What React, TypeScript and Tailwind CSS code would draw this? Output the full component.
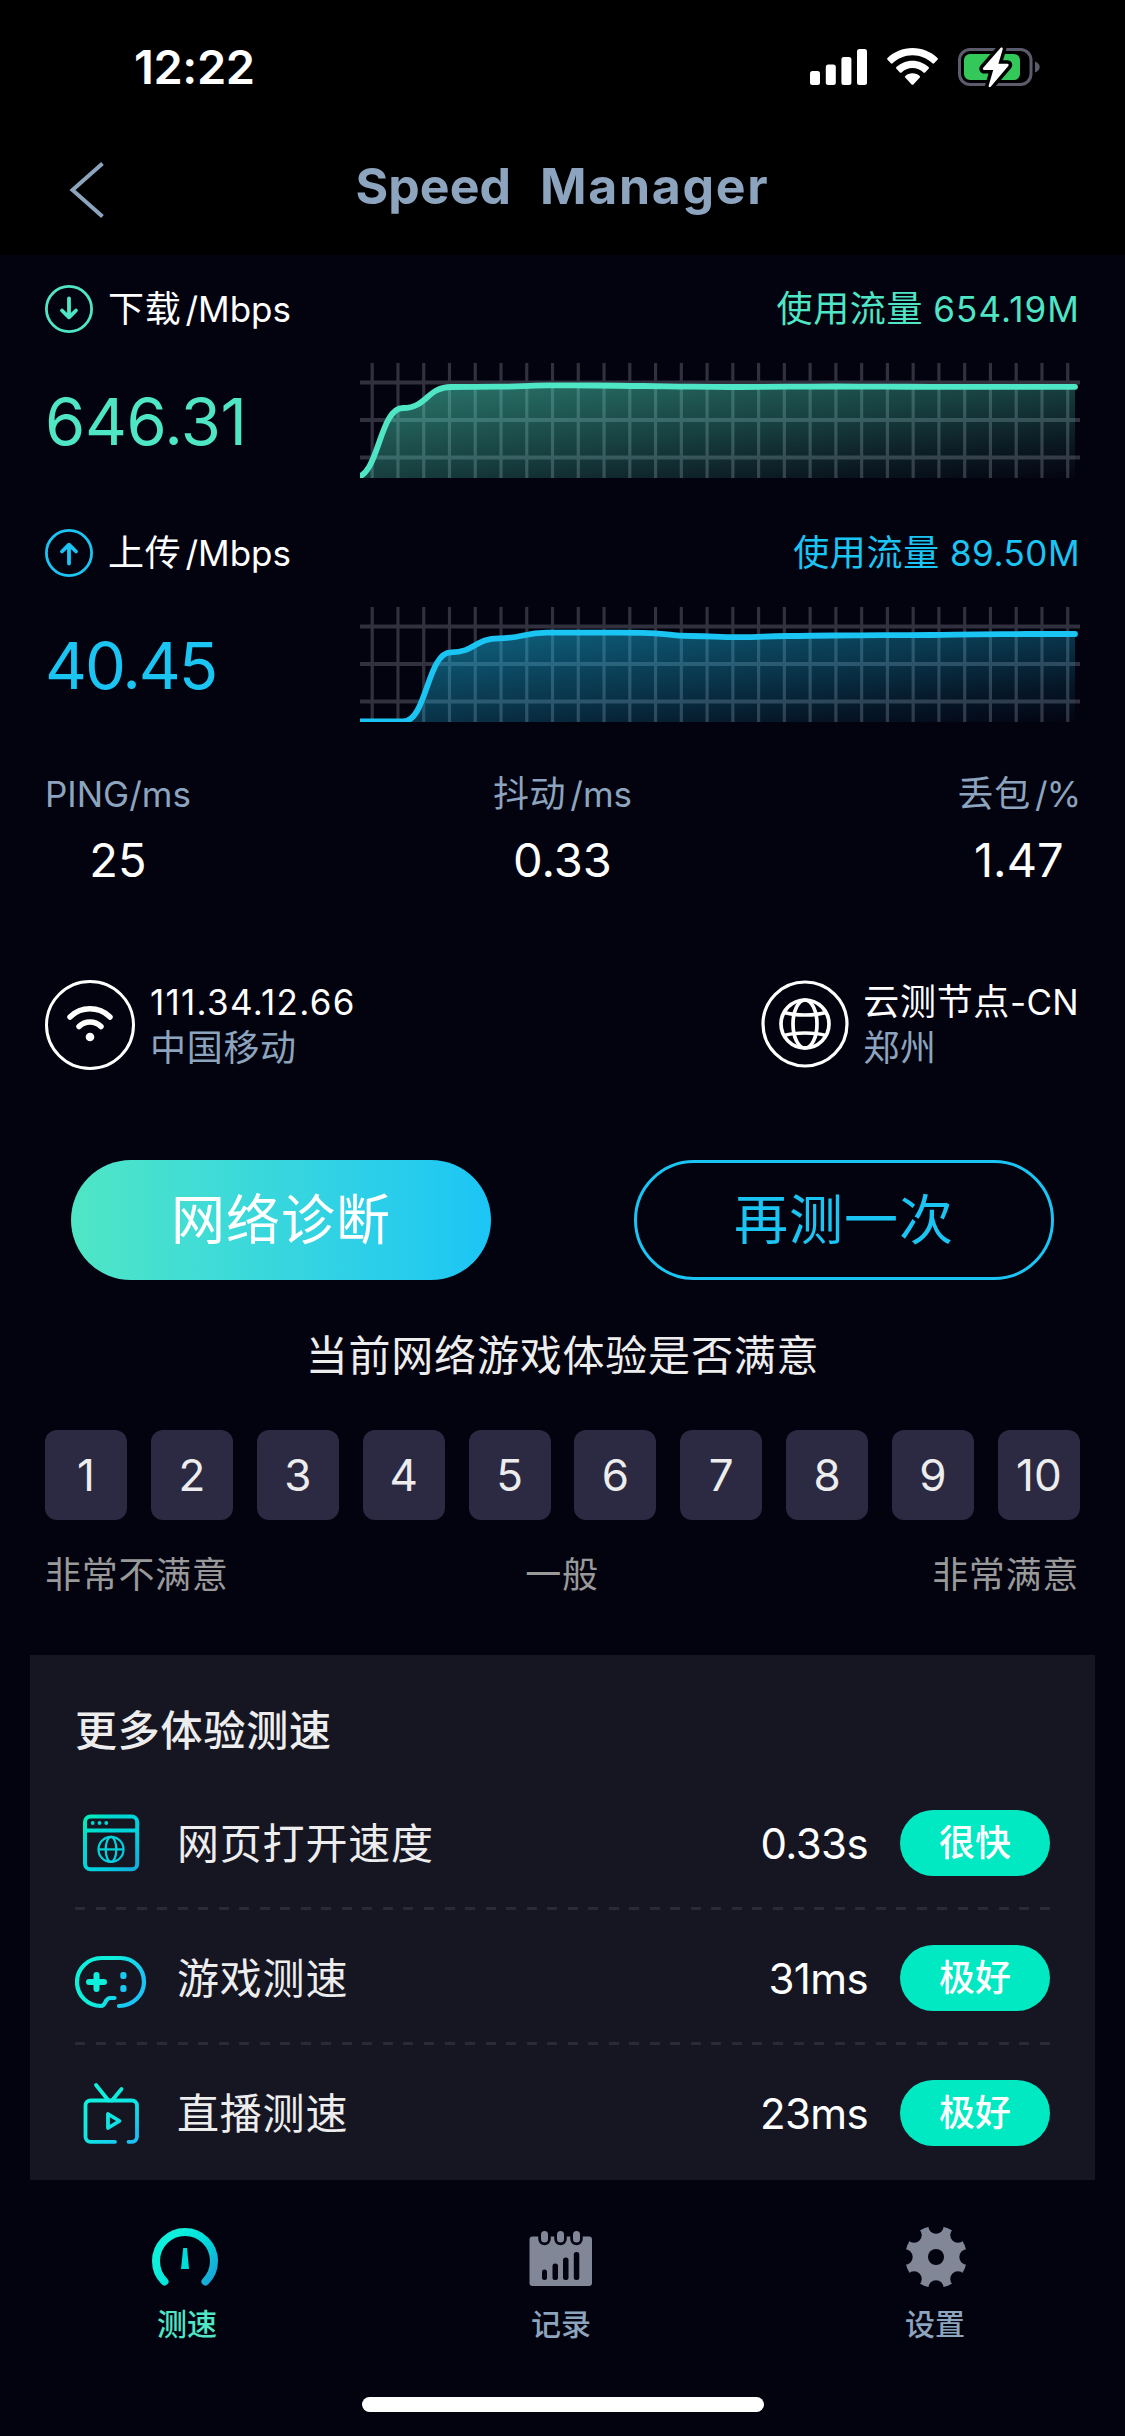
import React from "react";

const GREEN = "#4fe6c5";
const BLUE = "#1bc5f3";

function SignalIcon() {
  return (
    <svg width="57" height="38" viewBox="0 0 57 38" fill="#fff">
      <rect x="0" y="23" width="10" height="14" rx="2.5" />
      <rect x="15.8" y="16.5" width="10" height="20.5" rx="2.5" />
      <rect x="31.4" y="9" width="10" height="28" rx="2.5" />
      <rect x="47" y="1" width="10" height="36" rx="2.5" />
    </svg>
  );
}

function WifiIcon() {
  return (
    <svg width="51" height="38" viewBox="0 0 51 38" fill="#fff">
      <path d="M25.5 0C35.3 0 44.2 3.8 50.5 10.1c.5.5.5 1.2 0 1.7l-3.4 3.5c-.5.5-1.2.5-1.7 0C40.2 10.3 33.2 7.3 25.5 7.3S10.8 10.3 5.6 15.3c-.5.5-1.2.5-1.7 0L.5 11.8c-.5-.5-.5-1.2 0-1.7C6.8 3.8 15.7 0 25.5 0z" />
      <path d="M25.5 12.7c6.2 0 11.9 2.5 16.1 6.4.5.5.5 1.2 0 1.7l-3.5 3.6c-.5.5-1.2.5-1.7 0-2.9-2.7-6.7-4.3-10.9-4.3s-8 1.6-10.9 4.3c-.5.5-1.2.5-1.7 0l-3.5-3.6c-.5-.5-.5-1.2 0-1.7 4.2-3.9 9.9-6.4 16.1-6.4z" />
      <path d="M25.5 25.2c2.8 0 5.3 1 7.2 2.7.5.5.5 1.2.1 1.7l-6.4 6.8c-.5.5-1.3.5-1.8 0l-6.4-6.8c-.5-.5-.4-1.2.1-1.7 1.9-1.7 4.4-2.7 7.2-2.7z" />
    </svg>
  );
}

function BatteryIcon() {
  return (
    <svg width="82" height="42" viewBox="0 0 82 42" fill="none">
      <rect x="1.5" y="3.5" width="71.5" height="35" rx="10.5" stroke="#5b5b6b" strokeWidth="3" />
      <path d="M77 15.5c3 1 4.7 3 4.7 5.5s-1.7 4.5-4.7 5.5z" fill="#5b5b6b" />
      <rect x="6" y="8" width="56" height="26" rx="6" fill="#34c759" />
      <path
        d="M42.5 2 25.2 21.8c-.8 1-.3 2.2 1 2.2h9L30.700 39.500c-.4 1.600 1.200 2.200 2.200 1L50.300 20c.8-1 .3-2.200-1-2.200h-8.900L44.700 3.200C45.100 1.600 43.500 1 42.500 2z"
        fill="#fff"
        stroke="#000"
        strokeWidth="7"
        paintOrder="stroke"
      />
    </svg>
  );
}

function ArrowCircle({ color, up }: { color: string; up?: boolean }) {
  return (
    <svg width="48" height="48" viewBox="0 0 48 48" fill="none" stroke={color}>
      <circle cx="24" cy="24" r="22.6" strokeWidth="2.8" />
      <path
        d={up ? "M24 34.5V16M17 22.5l7-6.8 7 6.8" : "M24 13.5V32M17 25.5l7 6.8 7-6.8"}
        strokeWidth="3.8"
        strokeLinecap="round"
        strokeLinejoin="round"
      />
    </svg>
  );
}

/* Smooth line through evenly spaced samples, flat at every sample. */
function linePath(ys: number[]) {
  const step = 48;
  const x0 = -5;
  let d = `M${x0} ${ys[0]}`;
  for (let i = 1; i < ys.length; i++) {
    const px = x0 + step * (i - 1);
    const x = x0 + step * i;
    const m = (px + x) / 2;
    d += ` C${m} ${ys[i - 1]} ${m} ${ys[i]} ${x} ${ys[i]}`;
  }
  return d;
}

function SpeedChart({ id, color, ys }: { id: string; color: string; ys: number[] }) {
  const d = linePath(ys);
  return (
    <svg width="720" height="115" viewBox="0 0 720 115" fill="none">
      <defs>
        <linearGradient id={id} x1="0" y1="0" x2="1" y2="1">
          <stop offset="0" stopColor={color} stopOpacity="0.52" />
          <stop offset="0.5" stopColor={color} stopOpacity="0.27" />
          <stop offset="0.8" stopColor={color} stopOpacity="0.1" />
          <stop offset="1" stopColor={color} stopOpacity="0.01" />
        </linearGradient>
      </defs>
      {Array.from({ length: 28 }, (_, i) => (
        <line key={i} x1={12.2 + i * 25.76} x2={12.2 + i * 25.76} y1="0" y2="115" stroke="#31303f" strokeWidth="3.2" />
      ))}
      {[19.5, 57, 94.5].map((y) => (
        <line key={y} x1="0" x2="720" y1={y} y2={y} stroke="#31303f" strokeWidth="4.2" />
      ))}
      <path d={`${d} V115 H-5 Z`} fill={`url(#${id})`} />
      <path d={d} stroke={color} strokeWidth="5.8" strokeLinecap="round" />
    </svg>
  );
}

type SpeedProps = {
  id: string;
  label: string;
  usage: string;
  usageClass: string;
  value: string;
  valueClass: string;
  color: string;
  textClass: string;
  up?: boolean;
  ys: number[];
};

function SpeedBlock({ id, label, usage, usageClass, value, valueClass, color, textClass, up, ys }: SpeedProps) {
  return (
    <section className="px-[45px]">
      <div className="flex h-[48px] items-center text-[36px] leading-[48px]">
        <ArrowCircle color={color} up={up} />
        <span className="ml-[15px] tracking-[0.7px] text-white">{label}</span>
        <span className="ml-[4px] text-[35px] text-white">/Mbps</span>
        <span className={`ml-auto flex ${textClass}`}>
          <span className="tracking-[0.7px]">使用流量</span>
          <span className={`ml-[10px] text-[35px] ${usageClass}`}>{usage}</span>
        </span>
      </div>
      <div className="mt-[30px] flex h-[115px] items-center justify-between">
        <span className={`pt-[2px] text-[65px] leading-[80px] ${valueClass} ${textClass}`}>{value}</span>
        <SpeedChart id={id} color={color} ys={ys} />
      </div>
    </section>
  );
}

function Stat({ cjk, unit, unitClass = "", value }: { cjk?: string; unit: string; unitClass?: string; value: string }) {
  return (
    <div className="flex flex-col items-center gap-[12px]">
      <div className="flex h-[48px] text-[36px] leading-[48px] text-[#8da4be]">
        {cjk && <span className="mr-[4px] tracking-[0.7px]">{cjk}</span>}
        <span className={`text-[35px] ${unitClass}`}>{unit}</span>
      </div>
      <div className="text-[47px] leading-[60px] text-white">{value}</div>
    </div>
  );
}

function WifiCircle() {
  return (
    <svg width="90" height="90" viewBox="0 0 90 90" fill="none" stroke="#fff" strokeLinecap="round">
      <circle cx="45" cy="45" r="43.5" strokeWidth="3" />
      <path d="M25 37a28.5 28.5 0 0 1 40 0" strokeWidth="5.5" />
      <path d="M34 46.5a15.5 15.5 0 0 1 22 0" strokeWidth="5.5" />
      <circle cx="45" cy="57" r="4.3" fill="#fff" stroke="none" />
    </svg>
  );
}

function GlobeCircle() {
  return (
    <svg width="88" height="90" viewBox="0 0 88 90" fill="none" stroke="#fff">
      <circle cx="44" cy="44" r="42" strokeWidth="3.2" />
      <g strokeWidth="3.7">
        <circle cx="44" cy="44" r="24" />
        <ellipse cx="44" cy="44" rx="12" ry="24" />
        <path d="M23 32.5c7 2 14 2.5 21 2.5s14-.5 21-2.5M23 55.5c7-2 14-2.5 21-2.5s14 .5 21 2.5" />
      </g>
    </svg>
  );
}

function WebIcon() {
  return (
    <svg width="72" height="72" viewBox="0 0 72 72" fill="none">
      <defs>
        <linearGradient id="web" x1="8" y1="8" x2="64" y2="64" gradientUnits="userSpaceOnUse">
          <stop offset="0" stopColor="#00f0b4" />
          <stop offset="0.3" stopColor="#00d8d4" />
          <stop offset="0.65" stopColor="#00d0e0" />
          <stop offset="1" stopColor="#19a6dc" />
        </linearGradient>
      </defs>
      <g stroke="url(#web)">
        <rect x="10" y="9.5" width="52.2" height="52.8" rx="5.5" strokeWidth="4" />
        <path d="M10 23.5h52" strokeWidth="3.8" />
        <g strokeWidth="2.2">
          <circle cx="36" cy="42.4" r="12.5" />
          <ellipse cx="36" cy="42.4" rx="5.3" ry="12.5" />
          <path d="M23.5 42.4h25" />
        </g>
      </g>
      <g fill="#00d8d4">
        <circle cx="17.7" cy="16" r="1.9" />
        <circle cx="24.5" cy="16" r="1.9" />
        <circle cx="31.3" cy="16" r="1.9" />
      </g>
    </svg>
  );
}

function GameIcon() {
  return (
    <svg width="72" height="72" viewBox="0 0 72 72" fill="none">
      <defs>
        <linearGradient id="game" x1="30" y1="30" x2="62" y2="46" gradientUnits="userSpaceOnUse">
          <stop offset="0" stopColor="#0ff0dc" />
          <stop offset="1" stopColor="#1bc4f5" />
        </linearGradient>
      </defs>
      <path
        d="M44 64C58 63.5 69 53 69 40 69 26 58 16 45.5 16h-19C13 16 2 26.5 2 40c0 13 10.5 24 24 24 5.5 0 3-8 9.5-8h4"
        stroke="url(#game)"
        strokeWidth="4.2"
        strokeLinecap="round"
        strokeLinejoin="round"
      />
      <path d="M21.5 33v14M14 40h15" stroke="#0ff0dc" strokeWidth="6" strokeLinecap="round" />
      <g fill="#1bc8f2">
        <rect x="45.3" y="30" width="6.2" height="7" rx="2.5" />
        <rect x="45.3" y="43" width="6.2" height="7" rx="2.5" />
      </g>
    </svg>
  );
}

function TvIcon() {
  return (
    <svg width="72" height="72" viewBox="0 0 72 72" fill="none">
      <defs>
        <linearGradient id="tv" x1="22" y1="24" x2="56" y2="62" gradientUnits="userSpaceOnUse">
          <stop offset="0" stopColor="#0ff0dc" />
          <stop offset="0.5" stopColor="#0fe4e4" />
          <stop offset="1" stopColor="#1bc0f5" />
        </linearGradient>
      </defs>
      <g stroke="url(#tv)" strokeWidth="3.8" strokeLinecap="round" strokeLinejoin="round">
        <path d="M21 8l12.5 15.5M46.5 12l-9.5 11.5" />
        <path d="M40 64.8H15.5a5 5 0 0 1-5-5V28.5a5 5 0 0 1 5-5H57a5 5 0 0 1 5 5v31.3a5 5 0 0 1-5 5h-3.5" />
        <path d="M33 37v14l11.5-7z" />
      </g>
    </svg>
  );
}

function TestRow({ icon, name, value, grade }: { icon: React.ReactNode; name: string; value: string; grade: string }) {
  return (
    <div className="flex h-[132px] items-center pt-[4px]">
      <div className="w-[72px]">{icon}</div>
      <span className="ml-[30px] pt-[1px] text-[42px] leading-[60px] tracking-[0.8px] text-[#ededed]">{name}</span>
      <span className="ml-auto pt-[1px] text-[42px] leading-[60px] tracking-[-0.6px] text-white">{value}</span>
      <span className="ml-[32px] h-[66px] w-[150px] rounded-full bg-[#00e9c3] text-center text-[36px] font-medium leading-[66px] text-white">
        {grade}
      </span>
    </div>
  );
}

function Divider() {
  return (
    <div className="h-[3px] w-full bg-[repeating-linear-gradient(90deg,#2a2935_0px,#2a2935_10px,transparent_10px,transparent_20.53px)]" />
  );
}

function GaugeIcon() {
  return (
    <svg width="72" height="64" viewBox="0 0 72 64" fill="none">
      <defs>
        <linearGradient id="gauge" x1="20" y1="20" x2="64" y2="48" gradientUnits="userSpaceOnUse">
          <stop offset="0" stopColor="#0ff0dc" />
          <stop offset="0.5" stopColor="#00dcdc" />
          <stop offset="1" stopColor="#18a8d8" />
        </linearGradient>
      </defs>
      <path d="M13.5 56.5a29 29 0 1 1 41 0" stroke="url(#gauge)" strokeWidth="8" strokeLinecap="round" />
      <path d="M32.2 23h3.8l2 21h-8z" fill="#00dcd8" />
    </svg>
  );
}

function RecordIcon() {
  return (
    <svg width="72" height="64" viewBox="-1 0 72 64">
      <rect x="3.5" y="11.5" width="62.5" height="49.5" rx="3" fill="#828797" />
      {[18.5, 34.5, 50.5].map((x) => (
        <rect
          key={x}
          x={x - 3.5}
          y="6"
          width="7"
          height="11.5"
          rx="3.5"
          fill="#828797"
          stroke="#03020f"
          strokeWidth="5.5"
          paintOrder="stroke"
        />
      ))}
      <g fill="#03020f">
        <rect x="16" y="44.5" width="5" height="10.5" rx="2.5" />
        <rect x="26.5" y="38.5" width="5.5" height="16.5" rx="2.5" />
        <rect x="37" y="32.5" width="5.5" height="22.5" rx="2.5" />
        <rect x="47.8" y="27" width="5.5" height="28" rx="2.5" />
      </g>
    </svg>
  );
}

function GearIcon() {
  return (
    <svg width="72" height="64" viewBox="-1 0 72 64">
      <circle cx="36" cy="32" r="31" fill="#828797" />
      <g fill="#03020f">
        <circle cx="36" cy="32" r="8" />
        {[0, 45, 90, 135, 180, 225, 270, 315].map((a) => (
          <circle key={a} cx="36" cy="1" r="7.7" transform={`rotate(${a} 36 32)`} />
        ))}
      </g>
    </svg>
  );
}

function Tab({ icon, label, active }: { icon: React.ReactNode; label: string; active?: boolean }) {
  return (
    <div className="flex w-1/3 flex-col items-center">
      {icon}
      <span
        className={`mt-[14px] text-[30px] font-medium leading-[42px] ${active ? "text-[#4fe6c5]" : "text-[#8da4be]"}`}
      >
        {label}
      </span>
    </div>
  );
}

export default function App() {
  return (
    <div className="flex h-[2436px] w-[1125px] flex-col overflow-hidden bg-[#03020f] font-['Inter','Noto_Sans_CJK_SC',sans-serif]">
      <div className="flex h-[134px] items-center bg-black pl-[134px] pr-[85px]">
        <span className="text-[47px] font-semibold leading-[60px] tracking-[-0.4px] text-white">12:22</span>
        <div className="ml-auto flex items-center gap-[20px]">
          <SignalIcon />
          <WifiIcon />
          <BatteryIcon />
        </div>
      </div>
      <header className="grid h-[121px] grid-cols-[200px_1fr_200px] items-center bg-black pb-[10px]">
        <svg width="36" height="60" viewBox="0 0 36 60" fill="none" className="ml-[69px]">
          <path d="M33.5 3.5 3.5 30l30 26.5" stroke="#8da4be" strokeWidth="4" />
        </svg>
        <h1 className="mb-[8px] flex justify-center gap-[29px] text-[50px] font-bold leading-[60px] text-[#8da4be]">
          <span>Speed</span>
          <span className="tracking-[1.7px]">Manager</span>
        </h1>
      </header>

      <main className="flex flex-1 flex-col pt-[30px]">
        <SpeedBlock
          id="down"
          label="下载"
          usage="654.19M"
          usageClass="tracking-[1.1px]"
          value="646.31"
          valueClass="tracking-[-0.4px]"
          color={GREEN}
          textClass="text-[#4fe6c5]"
          ys={[114.5, 45, 24, 23.7, 22.4, 22.5, 23, 23.6, 24, 23.7, 23.5, 23.7, 23.8, 23.8, 23.8, 23.8]}
        />
        <div className="mt-[51px]">
          <SpeedBlock
            id="up"
            label="上传"
            usage="89.50M"
            usageClass="tracking-[0.5px]"
            value="40.45"
            valueClass="tracking-[-2.1px]"
            color={BLUE}
            textClass="text-[#1bc5f3]"
            up
            ys={[114.5, 114.5, 45.3, 31.3, 25.6, 25.6, 25.8, 29, 30.2, 29, 28.5, 28.2, 28, 27.3, 27, 27]}
          />
        </div>

        <div className="mt-[48px] grid grid-cols-3 px-[45px]">
          <div className="justify-self-start">
            <Stat unit="PING/ms" value="25" />
          </div>
          <div className="justify-self-center">
            <Stat cjk="抖动" unit="/ms" value="0.33" />
          </div>
          <div className="justify-self-end">
            <Stat cjk="丢包" unit="/%" unitClass="tracking-[-1px]" value="1.47" />
          </div>
        </div>

        <div className="mt-[90px] flex h-[90px] justify-between pl-[45px] pr-[46px] text-[36px] leading-[45px]">
          <div className="flex gap-[15px]">
            <WifiCircle />
            <div>
              <div className="text-[35px] tracking-[1.3px] text-white">111.34.12.66</div>
              <div className="pt-[1px] tracking-[0.7px] text-[#8da4be]">中国移动</div>
            </div>
          </div>
          <div className="flex gap-[14px]">
            <GlobeCircle />
            <div>
              <div className="text-white">
                <span className="tracking-[0.7px]">云测节点</span>
                <span className="text-[35px] tracking-[0.3px]">-CN</span>
              </div>
              <div className="pt-[1px] tracking-[0.7px] text-[#8da4be]">郑州</div>
            </div>
          </div>
        </div>

        <div className="mt-[90px] flex justify-between px-[71px] text-[54px] tracking-[1px]">
          <button className="h-[120px] w-[420px] rounded-full bg-linear-to-r from-[#4fe6c5] to-[#1bc5f5] leading-[122px] text-white">
            网络诊断
          </button>
          <button className="h-[120px] w-[420px] rounded-full border-[3px] border-[#1bc5f3] leading-[116px] text-[#1bc5f3]">
            再测一次
          </button>
        </div>

        <p className="mt-[46px] text-center text-[42px] leading-[60px] tracking-[0.8px] text-[#ededed]">
          当前网络游戏体验是否满意
        </p>
        <div className="mt-[44px] flex justify-between px-[45px]">
          {[1, 2, 3, 4, 5, 6, 7, 8, 9, 10].map((n) => (
            <div
              key={n}
              className="h-[90px] w-[82px] rounded-[12px] bg-[#2b2a42] text-center text-[44px] leading-[90px] text-[#ededed]"
            >
              {n}
            </div>
          ))}
        </div>
        <div className="mt-[31px] grid grid-cols-3 pl-[45px] pr-[46px] text-[36px] leading-[48px] tracking-[0.7px] text-[#999999]">
          <span>非常不满意</span>
          <span className="text-center">一般</span>
          <span className="text-right">非常满意</span>
        </div>

        <section className="mx-[30px] mt-[56px] h-[525px] bg-[#161622] px-[45px] pt-[46px]">
          <h2 className="mb-[14px] text-[42px] font-medium leading-[60px] tracking-[0.8px] text-[#ededed]">
            更多体验测速
          </h2>
          <TestRow icon={<WebIcon />} name="网页打开速度" value="0.33s" grade="很快" />
          <Divider />
          <TestRow icon={<GameIcon />} name="游戏测速" value="31ms" grade="极好" />
          <Divider />
          <TestRow icon={<TvIcon />} name="直播测速" value="23ms" grade="极好" />
        </section>
      </main>

      <nav className="flex h-[256px] flex-col">
        <div className="flex pr-[3px] pt-[45px]">
          <Tab icon={<GaugeIcon />} label="测速" active />
          <Tab icon={<RecordIcon />} label="记录" />
          <Tab icon={<GearIcon />} label="设置" />
        </div>
        <div className="mx-auto mb-[24px] mt-auto h-[15px] w-[402px] rounded-full bg-white" />
      </nav>
    </div>
  );
}
